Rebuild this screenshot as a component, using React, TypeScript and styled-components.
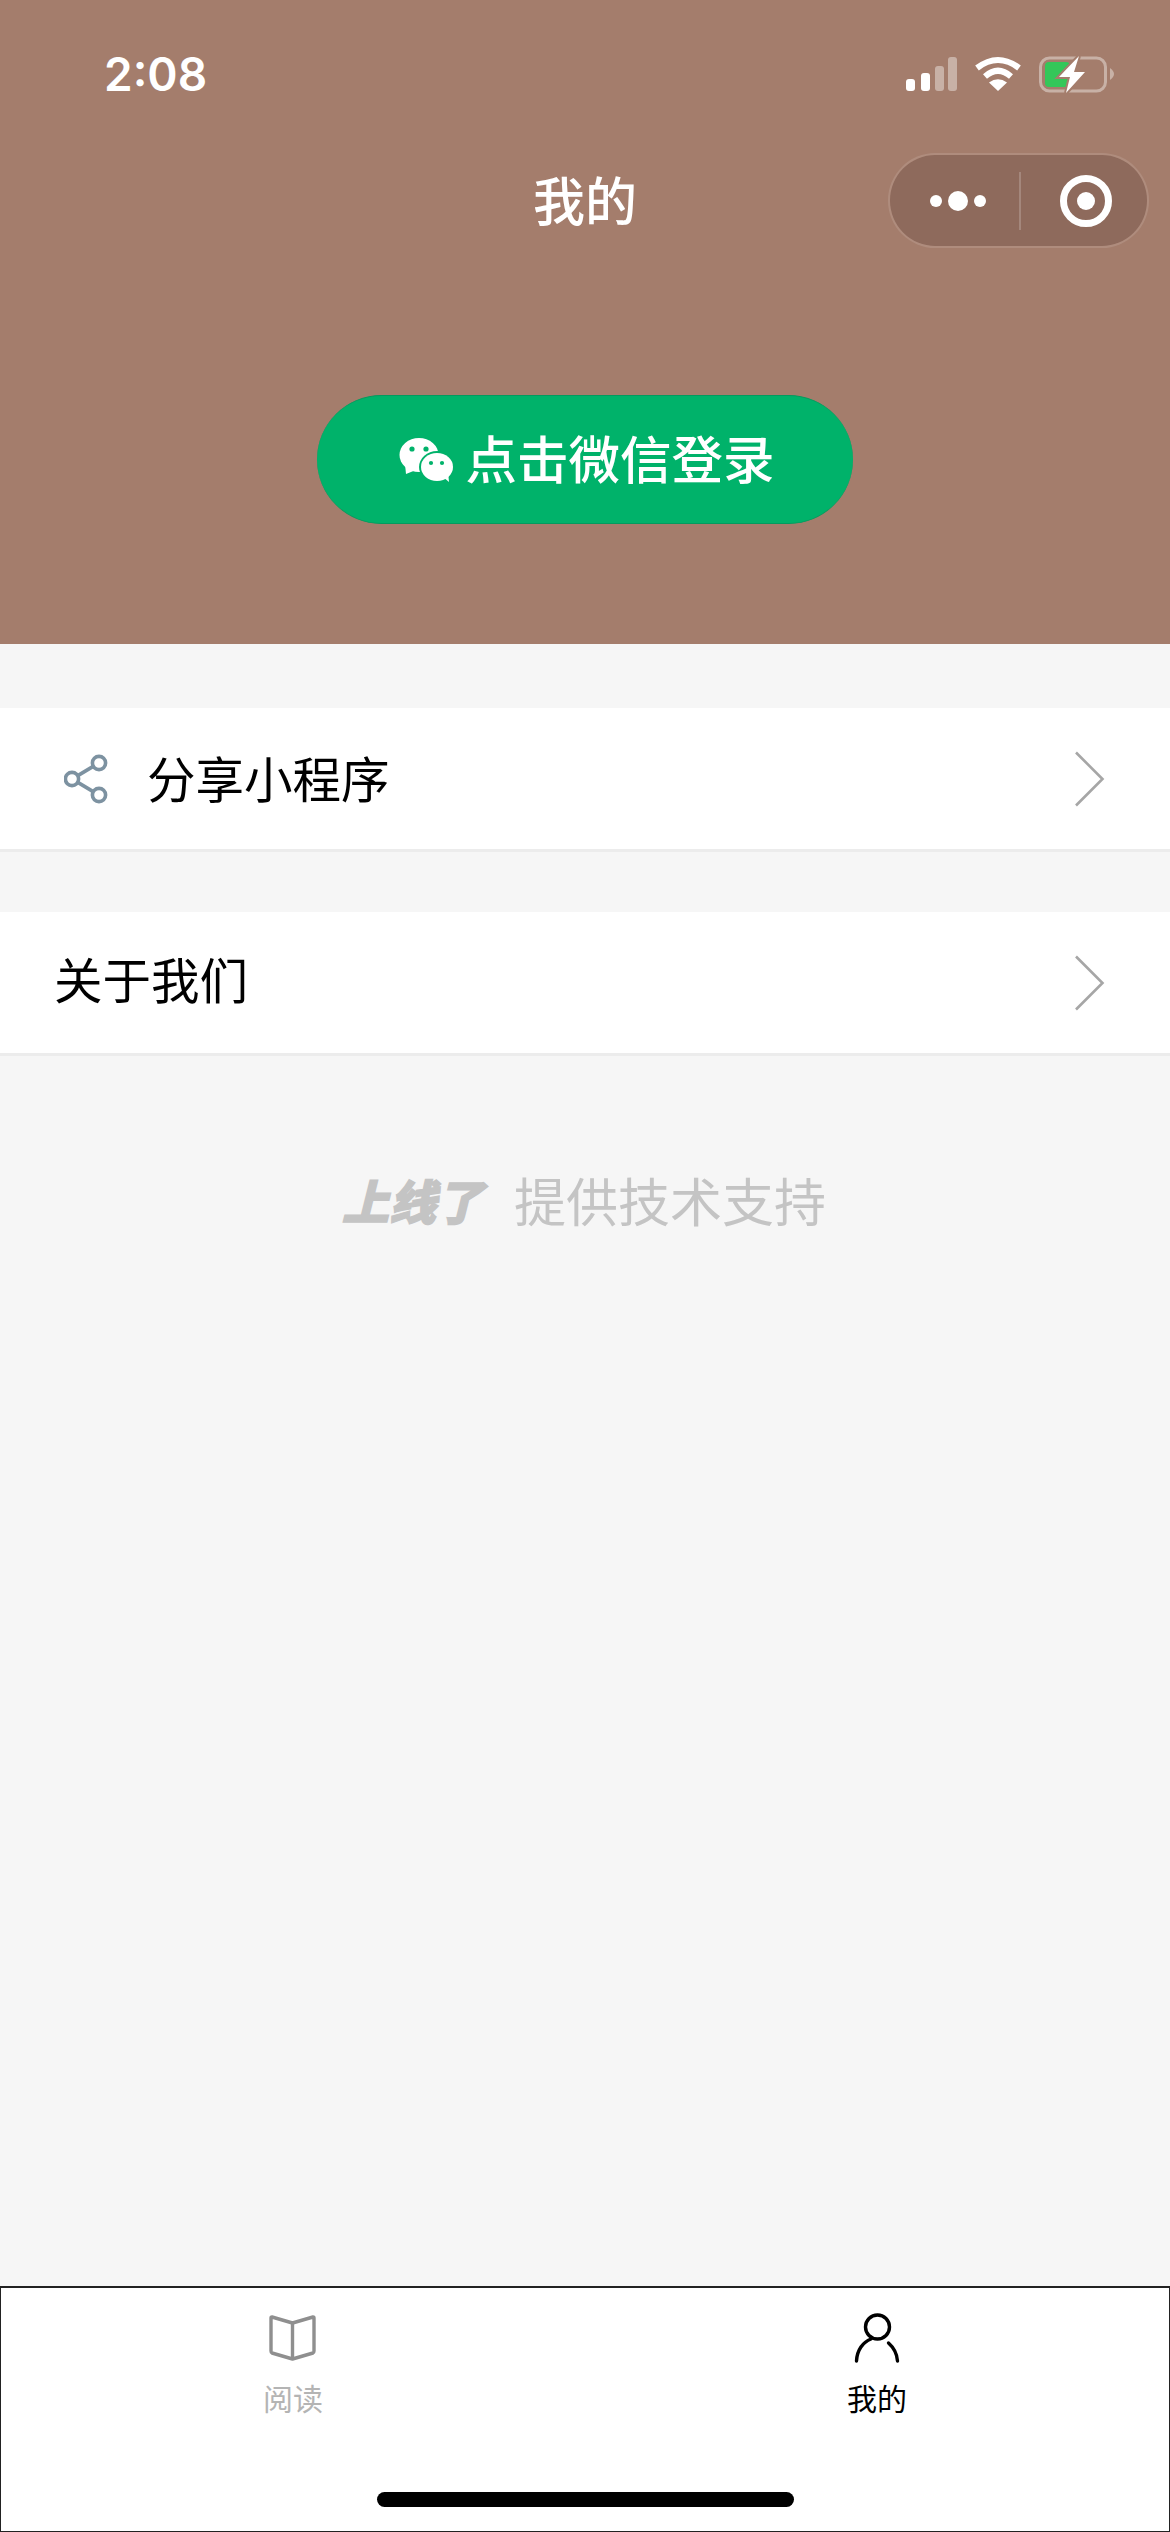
import styled, { createGlobalStyle } from "styled-components";

const GlobalStyle = createGlobalStyle`
  html, body {
    margin: 0;
    padding: 0;
    background: #f6f6f6;
  }
  * {
    box-sizing: border-box;
  }
`;

const CJK = `"Noto Sans CJK SC", "Noto Sans", sans-serif`;

const Page = styled.div`
  display: flex;
  flex-direction: column;
  width: 1170px;
  height: 2532px;
  overflow: hidden;
  background: #f6f6f6;
  font-family: ${CJK};
`;

const Header = styled.header`
  height: 644px;
  padding-top: 56px;
  background: #a47d6c;
`;

const StatusBar = styled.div`
  display: flex;
  justify-content: space-between;
  align-items: center;
  height: 36px;
  padding: 0 55px 0 104px;
`;

const Time = styled.span`
  font-family: Inter, sans-serif;
  font-size: 46px;
  font-weight: 600;
  line-height: 36px;
  color: #fff;
`;

const StatusIcons = styled.div`
  display: flex;
  gap: 17px;
  align-items: flex-start;
  height: 36px;
`;

const NavBar = styled.div`
  display: grid;
  grid-template-columns: 1fr auto 1fr;
  align-items: center;
  margin-top: 61px;
  padding: 0 21px;
`;

const NavTitle = styled.h1`
  grid-column: 2;
  margin: 0;
  padding-bottom: 3px;
  font-size: 52px;
  font-weight: 500;
  line-height: 92px;
  color: #fff;
`;

const Capsule = styled.div`
  grid-column: 3;
  justify-self: end;
  display: flex;
  align-items: center;
  width: 261px;
  height: 95px;
  border: 2px solid rgba(255, 255, 255, 0.12);
  border-radius: 48px;
  background: #8e6a5c;
  background-clip: padding-box;
`;

const CapsuleSide = styled.div<{ $inset: number }>`
  display: flex;
  flex: 1;
  justify-content: center;
  align-items: center;
  gap: 6px;
  padding-left: ${(p) => p.$inset}px;
`;

const CapsuleDivider = styled.div`
  width: 2px;
  height: 58px;
  background: rgba(255, 255, 255, 0.2);
`;

const Dot = styled.span<{ $size: number }>`
  width: ${(p) => p.$size}px;
  height: ${(p) => p.$size}px;
  border-radius: 50%;
  background: #fff;
`;

const LoginButton = styled.button`
  display: flex;
  justify-content: center;
  align-items: center;
  gap: 12px;
  width: 536px;
  height: 129px;
  margin: 147px auto 0;
  padding: 0 0 0 4px;
  border: 0;
  border-top: 1px solid #049a5e;
  border-bottom: 1px solid #049a5e;
  border-radius: 65px;
  background: #00b26a;
  font-family: ${CJK};
  font-size: 51.5px;
  font-weight: 500;
  line-height: 1;
  color: #fff;
`;

const LoginLabel = styled.span`
  padding-bottom: 6px;
`;

const MenuList = styled.div`
  display: flex;
  flex-direction: column;
  gap: 60px;
  margin-top: 64px;
`;

const MenuRow = styled.div`
  display: flex;
  align-items: center;
  height: 144px;
  padding: 0 63px 0 54px;
  border-bottom: 3px solid #ececec;
  background: #fff;
`;

const MenuIcon = styled.span`
  display: flex;
  width: 93px;
  padding-left: 10px;
`;

const MenuLabel = styled.span<{ $lift: number }>`
  flex: 1;
  padding-bottom: ${(p) => p.$lift}px;
  font-size: 48.5px;
  line-height: 1;
  color: #000;
`;

const Support = styled.div`
  display: flex;
  justify-content: center;
  align-items: center;
  gap: 26px;
  margin-top: 118px;
  padding-left: 3px;
  line-height: 52px;
  color: #c4c4c4;
`;

const SupportBrand = styled.span`
  display: inline-block;
  font-size: 47px;
  font-weight: 900;
  -webkit-text-stroke: 1.5px #c4c4c4;
  transform: skewX(-14deg);
`;

const SupportText = styled.span`
  font-size: 52px;
`;

const TabBar = styled.nav`
  display: flex;
  flex-direction: column;
  height: 246px;
  margin-top: auto;
  border: 2px solid #222;
  border-width: 2px 1px 1px;
  background: #fff;
`;

const Tabs = styled.div`
  display: grid;
  grid-template-columns: 1fr 1fr;
  padding-top: 25px;
`;

const Tab = styled.div<{ $active?: boolean }>`
  display: flex;
  flex-direction: column;
  align-items: center;
  gap: 16px;
  font-size: 30px;
  line-height: 36px;
  color: ${(p) => (p.$active ? "#000" : "#b4b4b4")};
`;

const HomeIndicator = styled.div`
  width: 417px;
  height: 15px;
  margin: 77px auto 0;
  border-radius: 8px;
  background: #000;
`;

const SignalIcon = () => (
  <svg width="51" height="36" viewBox="0 0 51 36">
    <rect x="0" y="23" width="9" height="12" rx="3" fill="#fff" />
    <rect x="15" y="17" width="9" height="18" rx="3" fill="#fff" />
    <rect x="29" y="10" width="9" height="25" rx="3" fill="#fff" fillOpacity="0.4" />
    <rect x="42" y="1" width="9" height="34" rx="3" fill="#fff" fillOpacity="0.4" />
  </svg>
);

const WifiIcon = () => (
  <svg width="48" height="36" viewBox="0 0 48 36" fill="none">
    <path d="M3 12 Q24 -4 45 12" stroke="#fff" strokeWidth="6" />
    <path d="M11 20.5 Q24 9 37 20.5" stroke="#fff" strokeWidth="6" />
    <path d="M24 35 L15 26.5 Q24 20 33 26.5 Z" fill="#fff" />
  </svg>
);

const BatteryIcon = () => (
  <svg width="76" height="37" viewBox="0 0 76 37" fill="none">
    <rect x="1.5" y="2" width="65" height="33" rx="9" stroke="#fff" strokeOpacity="0.4" strokeWidth="3" />
    <path d="M71 12 Q75 15 75 18 Q75 21 71 24 Z" fill="#fff" fillOpacity="0.4" />
    <rect x="6" y="6" width="25" height="25" rx="4" fill="#34c759" />
    <path d="M40 0 L20 21 L31 21 L27 37 L46 16 L35 16 Z" fill="#a47d6c" stroke="#a47d6c" strokeWidth="4" />
    <path d="M40 0 L20 21 L31 21 L27 37 L46 16 L35 16 Z" fill="#fff" />
  </svg>
);

const RingIcon = () => (
  <svg width="52" height="52" viewBox="0 0 52 52" fill="none">
    <circle cx="26" cy="26" r="22.5" stroke="#fff" strokeWidth="7" />
    <circle cx="26" cy="26" r="9" fill="#fff" />
  </svg>
);

const WechatIcon = () => (
  <svg width="54" height="46" viewBox="0 0 54 46">
    <ellipse cx="20" cy="18" rx="19.5" ry="17" fill="#fff" />
    <path d="M6 27 L7 37 L17 33 Z" fill="#fff" />
    <circle cx="13" cy="12" r="2.6" fill="#00b26a" />
    <circle cx="27" cy="12" r="2.6" fill="#00b26a" />
    <ellipse cx="38" cy="30" rx="18" ry="16" fill="#00b26a" />
    <ellipse cx="38" cy="30" rx="16" ry="14" fill="#fff" />
    <path d="M44 40 L50 45 L49 35 Z" fill="#fff" />
    <circle cx="32" cy="26" r="2.1" fill="#00b26a" />
    <circle cx="43" cy="26" r="2.1" fill="#00b26a" />
  </svg>
);

const ShareIcon = () => (
  <svg width="44" height="50" viewBox="0 0 44 50" fill="none" stroke="#7d92a1" strokeWidth="3.6">
    <circle cx="35" cy="9" r="6.6" />
    <circle cx="8" cy="25" r="6.6" />
    <circle cx="35" cy="41" r="6.6" />
    <path d="M13.8 21.6 L29.2 12.4 M13.8 28.4 L29.2 37.6" />
  </svg>
);

const Chevron = () => (
  <svg width="32" height="56" viewBox="0 0 32 56" fill="none" stroke="#a6a6a6" strokeWidth="2.6">
    <path d="M1 1.5 L27.5 28 L1 54.5" />
  </svg>
);

const BookIcon = () => (
  <svg width="50" height="50" viewBox="0 0 50 50" fill="none" stroke="#8f8f8f" strokeWidth="3.4" strokeLinejoin="round">
    <path d="M24.5 10 L4 4 Q3 4 3 5 L3 38 Q3 39.5 4 40 L24.5 46 L45 40 Q46 39.5 46 38 L46 5 Q46 4 45 4 Z" />
    <path d="M24.5 10 L24.5 46" />
  </svg>
);

const PersonIcon = () => (
  <svg width="50" height="50" viewBox="0 0 50 50" fill="none" stroke="#000" strokeWidth="3.4" strokeLinecap="round">
    <circle cx="25.5" cy="14" r="12" />
    <path d="M4.5 48 C5 37 11 29 19 26" />
    <path d="M36.5 30 C41 34 45 40 45.5 48" />
  </svg>
);

export default function App() {
  return (
    <Page>
      <GlobalStyle />
      <Header>
        <StatusBar>
          <Time>2:08</Time>
          <StatusIcons>
            <SignalIcon />
            <WifiIcon />
            <BatteryIcon />
          </StatusIcons>
        </StatusBar>
        <NavBar>
          <NavTitle>我的</NavTitle>
          <Capsule>
            <CapsuleSide $inset={7}>
              <Dot $size={12} />
              <Dot $size={20} />
              <Dot $size={12} />
            </CapsuleSide>
            <CapsuleDivider />
            <CapsuleSide $inset={4}>
              <RingIcon />
            </CapsuleSide>
          </Capsule>
        </NavBar>
        <LoginButton>
          <WechatIcon />
          <LoginLabel>点击微信登录</LoginLabel>
        </LoginButton>
      </Header>

      <MenuList>
        <MenuRow>
          <MenuIcon>
            <ShareIcon />
          </MenuIcon>
          <MenuLabel $lift={3}>分享小程序</MenuLabel>
          <Chevron />
        </MenuRow>
        <MenuRow>
          <MenuLabel $lift={8}>关于我们</MenuLabel>
          <Chevron />
        </MenuRow>
      </MenuList>

      <Support>
        <SupportBrand>上线了</SupportBrand>
        <SupportText>提供技术支持</SupportText>
      </Support>

      <TabBar>
        <Tabs>
          <Tab>
            <BookIcon />
            阅读
          </Tab>
          <Tab $active>
            <PersonIcon />
            我的
          </Tab>
        </Tabs>
        <HomeIndicator />
      </TabBar>
    </Page>
  );
}
